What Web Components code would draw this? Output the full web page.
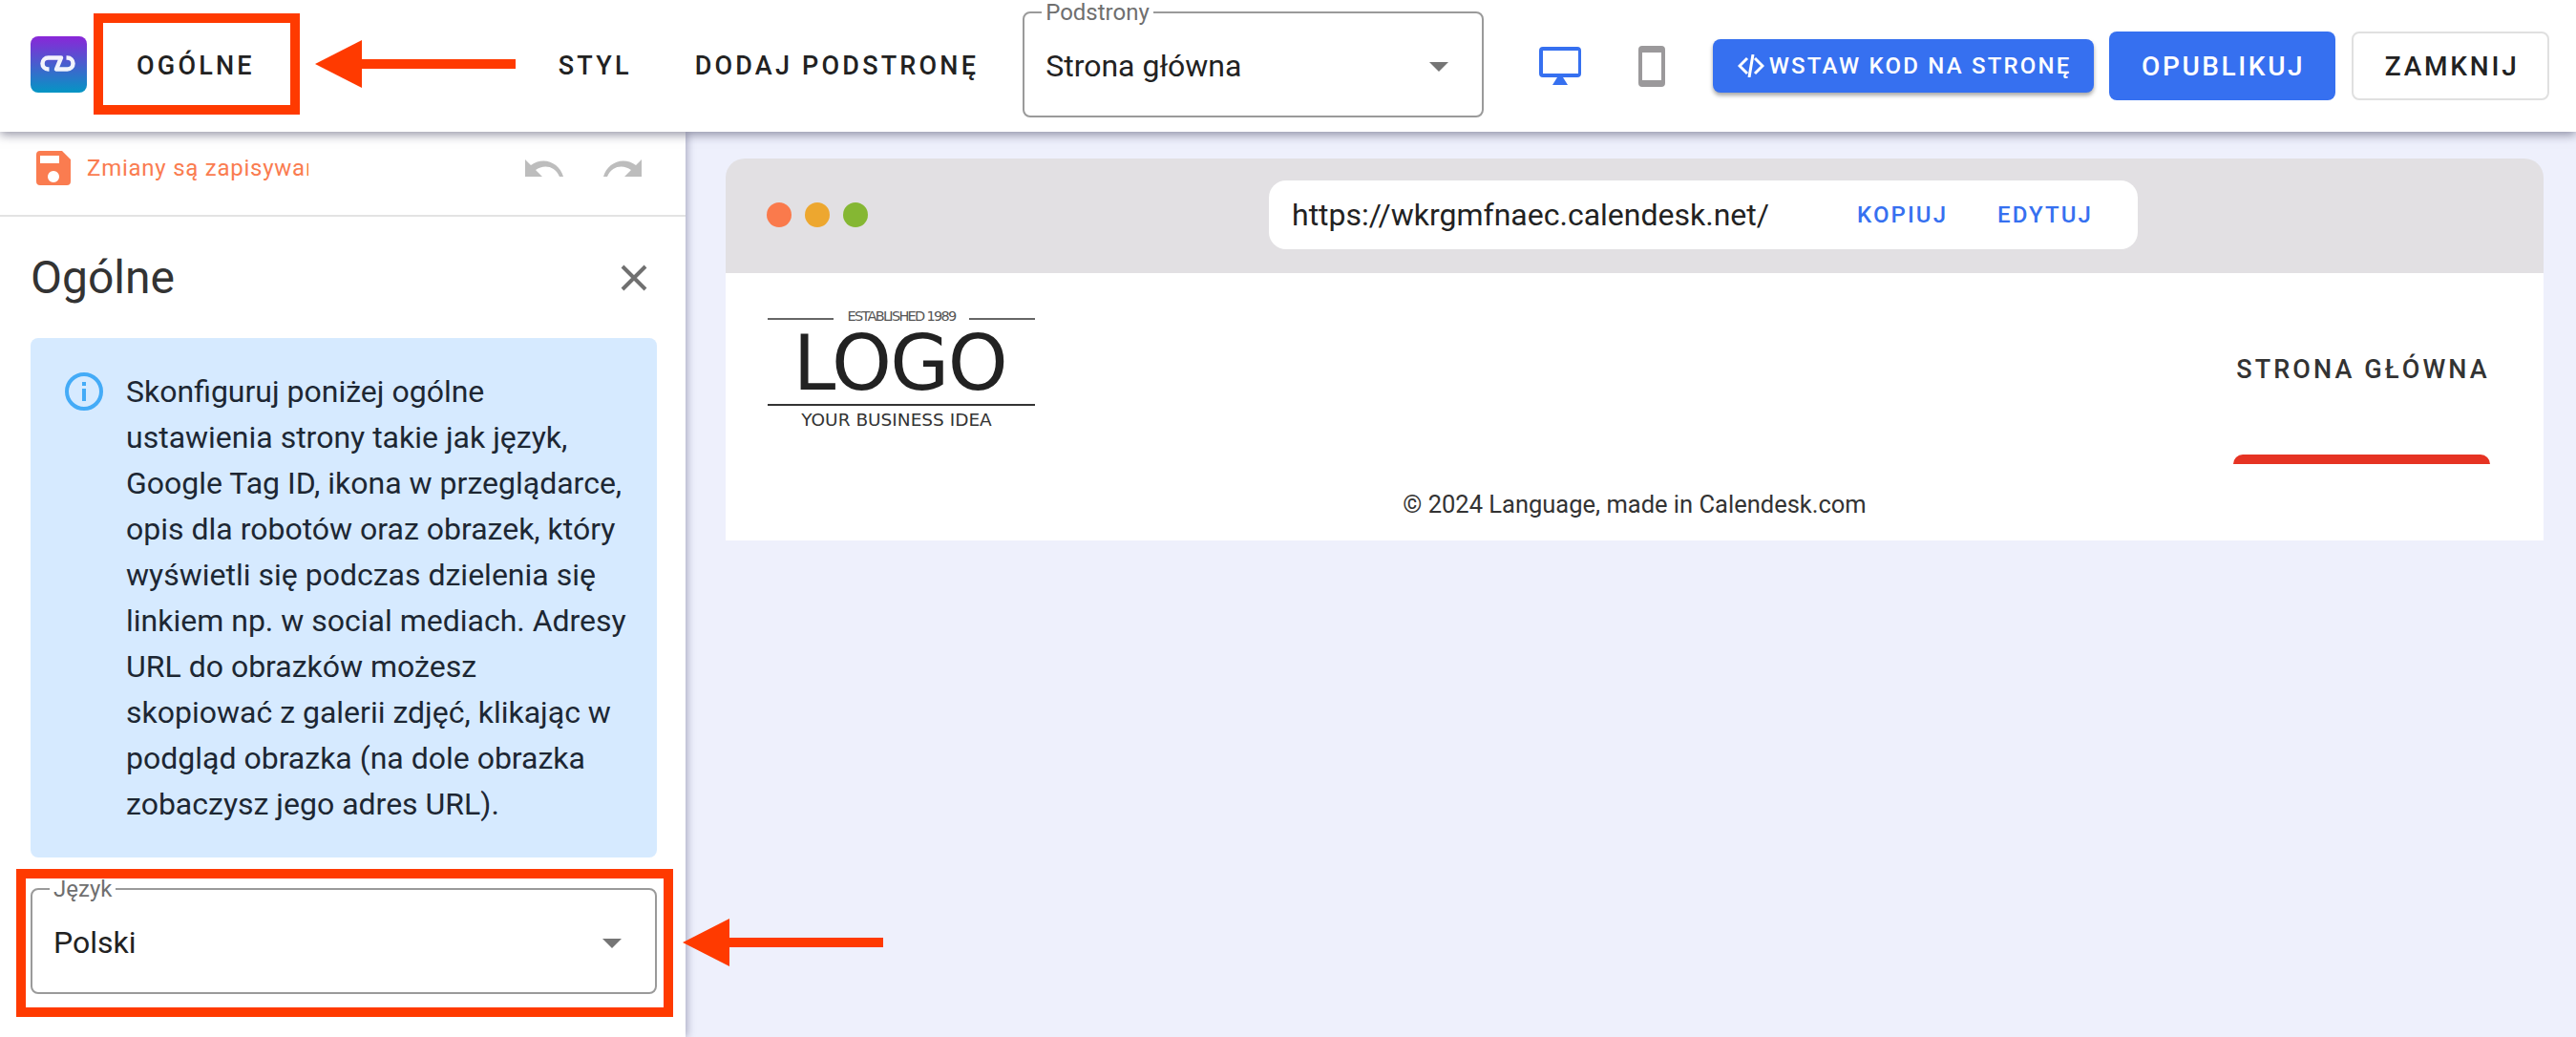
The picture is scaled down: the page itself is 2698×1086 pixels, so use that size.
<!DOCTYPE html>
<html lang="pl">
<head>
<meta charset="utf-8">
<title>Ogólne</title>
<style>
  html, body { margin: 0; height: 100%; }
  body {
    width: 2698px;
    height: 1086px;
    overflow: hidden;
    background: #eef0fc;
    font-family: Roboto, "Liberation Sans", sans-serif;
    color: #222;
    display: flex;
    flex-direction: column;
    position: relative;
  }
</style>
</head>
<body>
<top-bar></top-bar>
<div style="display:flex;flex:1;min-height:0">
  <side-panel></side-panel>
  <site-preview></site-preview>
</div>
<mark-box style="left:98px;top:14px;width:216px;height:106px"></mark-box>
<mark-box style="left:17px;top:910px;width:688px;height:155px"></mark-box>
<mark-arrow style="left:330px;top:42px;width:210px"></mark-arrow>
<mark-arrow style="left:715px;top:962px;width:210px"></mark-arrow>

<script>
class OutlinedSelect extends HTMLElement {
  constructor() {
    super();
    this.attachShadow({ mode: 'open' }).innerHTML = `
    <style>
      :host { display: block; position: relative; box-sizing: border-box; height: 111px; }
      fieldset {
        position: absolute; inset: 0; margin: 0; padding: 0 0 0 18px;
        border: 2px solid #9a9a9a; border-radius: 8px;
      }
      legend { padding: 0 4px; font-size: 24px; line-height: 2px; color: #6f6f6f; height: 2px; }
      .value {
        position: absolute; left: 24px; top: 37px; font-size: 32px; line-height: 40px; color: #222;
      }
      .caret {
        position: absolute; right: 37px; top: 53px; width: 0; height: 0;
        border-left: 10px solid transparent; border-right: 10px solid transparent;
        border-top: 10px solid #757575;
      }
    </style>
    <fieldset><legend><slot name="label"></slot></legend></fieldset>
    <div class="value"><slot></slot></div>
    <div class="caret"></div>`;
  }
}
customElements.define('outlined-select', OutlinedSelect);

class TopBar extends HTMLElement {
  constructor() {
    super();
    this.attachShadow({ mode: 'open' }).innerHTML = `
    <style>
      :host {
        display: flex; align-items: center; box-sizing: border-box; height: 138px; flex: none;
        background: #fff; padding-left: 32px; position: relative; z-index: 2;
        box-shadow: 0 3px 10px rgba(60,60,90,.55);
      }
      .logo { width: 59px; height: 59px; flex: none; display: block; margin-top: -3px; }
      .tab {
        font-size: 27px; font-weight: 500; letter-spacing: 3.2px; color: #222; white-space: nowrap;
      }
      outlined-select { width: 483px; flex: none; margin-top: -3px; }
      .btn {
        display: flex; align-items: center; justify-content: center; box-sizing: border-box;
        border-radius: 8px; font-weight: 500; white-space: nowrap;
      }
      .code {
        width: 399px; height: 56px; margin-left: 50px; padding-left: 2px; background: #3670f0; color: #fff;
        font-size: 24px; letter-spacing: 2.2px; gap: 5px; box-shadow: 0 3px 4px rgba(0,0,0,.35);
      }
      .code svg { flex: none; }
      .pub {
        width: 237px; height: 72px; margin-left: 16px; background: #3670f0; color: #fff;
        font-size: 28px; letter-spacing: 2.6px; padding-left: 2px;
      }
      .close {
        width: 207px; height: 72px; margin-left: 17px; background: #fff; color: #222;
        border: 2px solid #e0e0e0; font-size: 28px; letter-spacing: 2.8px; padding-left: 3px;
      }
    </style>
    <svg class="logo" viewBox="0 0 59 59">
      <defs><linearGradient id="g" x1="0" y1="0" x2="0" y2="1">
        <stop offset="0" stop-color="#8a26d8"/><stop offset="1" stop-color="#0496c4"/>
      </linearGradient></defs>
      <rect width="59" height="59" rx="8" fill="url(#g)"/>
      <path d="M19.500 34.500h-1a6 6 0 0 1 0-12H32L27 34.500H38.500a6 6 0 0 0 0-12h-1" fill="none" stroke="#fff" stroke-width="4.500" stroke-linejoin="round" opacity=".93"/>
    </svg>
    <span class="tab" style="margin-left:52px">OGÓLNE</span>
    <span class="tab" style="margin-left:318px">STYL</span>
    <span class="tab" style="margin-left:66px">DODAJ PODSTRONĘ</span>
    <outlined-select style="margin-left:46px"><span slot="label">Podstrony</span>Strona główna</outlined-select>
    <svg style="margin-left:58px;flex:none" width="44" height="40" viewBox="0 0 44 40">
      <path d="M4 0h36a4 4 0 0 1 4 4v24a4 4 0 0 1-4 4H4a4 4 0 0 1-4-4V4a4 4 0 0 1 4-4zM4 4v24h37V4z" fill="#3670f0" fill-rule="evenodd"/>
      <path d="M19 32h6l5 8H14z" fill="#3670f0"/>
    </svg>
    <svg style="margin-left:60px;flex:none" width="28" height="43" viewBox="0 0 28 43">
      <path d="M4 0h20a4 4 0 0 1 4 4v35a4 4 0 0 1-4 4H4a4 4 0 0 1-4-4V4a4 4 0 0 1 4-4zM4 7v29h20V7z" fill="#9b999b" fill-rule="evenodd"/>
    </svg>
    <div class="btn code">
      <svg width="28" height="24" viewBox="0 0 28 24" fill="none" stroke="#fff" stroke-width="3">
        <path d="M10 4 2 12l8 8M18 4l8 8-8 8M16 0l-4 24"/>
      </svg>
      <span>WSTAW KOD NA STRONĘ</span>
    </div>
    <div class="btn pub">OPUBLIKUJ</div>
    <div class="btn close">ZAMKNIJ</div>`;
  }
}
customElements.define('top-bar', TopBar);

class SidePanel extends HTMLElement {
  constructor() {
    super();
    this.attachShadow({ mode: 'open' }).innerHTML = `
    <style>
      :host {
        display: block; width: 718px; flex: none; box-sizing: border-box; background: #fff;
        box-shadow: 2px 0 8px rgba(70,70,110,.4); position: relative; z-index: 1;
      }
      .save {
        display: flex; align-items: center; height: 89px; box-sizing: border-box;
        padding: 0 46px 12px 38px; border-bottom: 2px solid #e3e3e3;
      }
      .save span {
        width: 232px; margin-left: 17px; overflow: hidden; white-space: nowrap;
        font-size: 24px; letter-spacing: .75px; color: #fa7c50;
      }
      .history { margin-left: auto; display: flex; gap: 42px; }
      .head {
        display: flex; align-items: center; justify-content: space-between;
        height: 127px; padding: 0 39px 0 32px;
      }
      h1 { margin: 0; font-size: 48px; font-weight: 400; color: #333; }
      .alert {
        display: flex; gap: 24px; box-sizing: border-box; margin: 0 30px 0 32px; height: 544px;
        padding: 32px 30px 0 36px; border-radius: 8px; background: #d6eaff;
        color: #1d2733; font-size: 32px; line-height: 48px;
      }
      .alert svg { flex: none; margin-top: 4px; }
      outlined-select { margin: 32px 30px 0 32px; }
    </style>
    <div class="save">
      <svg width="36" height="36" viewBox="0 0 36 36">
        <path d="M4 0h23l9 9v23a4 4 0 0 1-4 4H4a4 4 0 0 1-4-4V4a4 4 0 0 1 4-4zM4 5v8h20V5zM18 21a6 6 0 1 0 .01 0z" fill="#fa7c50" fill-rule="evenodd"/>
      </svg>
      <span>Zmiany są zapisywane</span>
      <div class="history">
        <svg width="40" height="18" viewBox="0 0 40 18"><path d="M0 0v18h18l-7-7c8-6 20-5 25 7h4C36 4 20-4 6 6z" fill="#bdbdbd"/></svg>
        <svg width="40" height="18" viewBox="0 0 40 18"><path transform="matrix(-1 0 0 1 40 0)" d="M0 0v18h18l-7-7c8-6 20-5 25 7h4C36 4 20-4 6 6z" fill="#bdbdbd"/></svg>
      </div>
    </div>
    <div class="head">
      <h1>Ogólne</h1>
      <svg width="30" height="30" viewBox="0 0 30 30" stroke="#707070" stroke-width="4"><path d="M3 3l24 24M27 3 3 27"/></svg>
    </div>
    <div class="alert">
      <svg width="40" height="40" viewBox="0 0 40 40">
        <circle cx="20" cy="20" r="18" fill="none" stroke="#44abf7" stroke-width="4"/>
        <rect x="18" y="17" width="4" height="13" fill="#44abf7"/><rect x="18" y="10" width="4" height="4" fill="#44abf7"/>
      </svg>
      <div>Skonfiguruj poniżej ogólne ustawienia strony takie jak język, Google Tag ID, ikona w przeglądarce, opis dla robotów oraz obrazek, który wyświetli się podczas dzielenia się linkiem np. w social mediach. Adresy URL do obrazków możesz skopiować z galerii zdjęć, klikając w podgląd obrazka (na dole obrazka zobaczysz jego adres URL).</div>
    </div>
    <outlined-select><span slot="label">Język</span>Polski</outlined-select>`;
  }
}
customElements.define('side-panel', SidePanel);

class SitePreview extends HTMLElement {
  constructor() {
    super();
    this.attachShadow({ mode: 'open' }).innerHTML = `
    <style>
      :host { display: block; flex: 1; padding: 28px 34px 0 42px; min-width: 0; }
      .chrome {
        display: flex; align-items: center; height: 120px; background: #e2e0e3;
        border-radius: 20px 20px 0 0; padding-left: 43px;
      }
      .dot { width: 26px; height: 26px; border-radius: 50%; margin-right: 14px; margin-top: -2px; }
      .url {
        display: flex; align-items: center; box-sizing: border-box; width: 910px; height: 72px;
        margin-left: 406px; margin-top: -2px; padding-left: 24px; background: #fff; border-radius: 18px;
        font-size: 32px; color: #222;
      }
      .url b { font-weight: 500; font-size: 24px; letter-spacing: 2.100px; color: #3670f0; }
      .page { height: 280px; background: #fff; }
      .row { display: flex; justify-content: space-between; box-sizing: border-box; padding: 36px 56px 0 44px; height: 200px; }
      .brand { width: 280px; font-family: "DejaVu Sans", sans-serif; color: #222; text-align: center; }
      .est { display: flex; align-items: center; gap: 14px; font-size: 14.500px; letter-spacing: -1.7px; color: #555; height: 18px; white-space: nowrap; }
      .est i { flex: 1; height: 2px; background: #666; margin-top: 6px; }
      .word { font-size: 80px; line-height: 78px; letter-spacing: -1.500px; height: 81px; margin-top: 2px; border-bottom: 2px solid #333; text-indent: -3px; }
      .tag { font-size: 18.500px; margin-top: 4px; color: #333; text-indent: -10px; white-space: nowrap; }
      .nav { display: flex; flex-direction: column; align-items: center; width: 269px; }
      .nav span { font-size: 27px; line-height: 32px; font-weight: 500; letter-spacing: 3.100px; color: #333; margin: 49px 0 0 3px; white-space: nowrap; }
      .nav i { flex: none; width: 269px; height: 10px; background: #e63323; border-radius: 12px 12px 0 0; margin-top: 73px; }
      footer { text-align: center; font-size: 25.500px; line-height: 30px; color: #333; margin-top: 27px; }
    </style>
    <div class="chrome">
      <div class="dot" style="background:#fa7a4c"></div>
      <div class="dot" style="background:#eda72f"></div>
      <div class="dot" style="background:#85b733"></div>
      <div class="url">
        <span>https://wkrgmfnaec.calendesk.net/</span>
        <b style="margin-left:92px">KOPIUJ</b>
        <b style="margin-left:52px">EDYTUJ</b>
      </div>
    </div>
    <div class="page">
      <div class="row">
        <div class="brand">
          <div class="est"><i></i><span>ESTABLISHED 1989</span><i></i></div>
          <div class="word">LOGO</div>
          <div class="tag">YOUR BUSINESS IDEA</div>
        </div>
        <div class="nav"><span>STRONA GŁÓWNA</span><i></i></div>
      </div>
      <footer>© 2024 Language, made in Calendesk.com</footer>
    </div>`;
  }
}
customElements.define('site-preview', SitePreview);

class MarkBox extends HTMLElement {
  constructor() {
    super();
    this.attachShadow({ mode: 'open' }).innerHTML = `
    <style>
      :host { display: block; position: absolute; box-sizing: border-box; border: 10px solid #ff3a00; z-index: 5; }
    </style>`;
  }
}
customElements.define('mark-box', MarkBox);

class MarkArrow extends HTMLElement {
  constructor() {
    super();
    this.attachShadow({ mode: 'open' }).innerHTML = `
    <style>
      :host { display: flex; align-items: center; position: absolute; height: 50px; z-index: 5; }
      .head { width: 0; height: 0; border-top: 25px solid transparent; border-bottom: 25px solid transparent; border-right: 49px solid #ff3a00; }
      .shaft { flex: 1; height: 10px; background: #ff3a00; }
    </style>
    <div class="head"></div><div class="shaft"></div>`;
  }
}
customElements.define('mark-arrow', MarkArrow);
</script>
</body>
</html>
